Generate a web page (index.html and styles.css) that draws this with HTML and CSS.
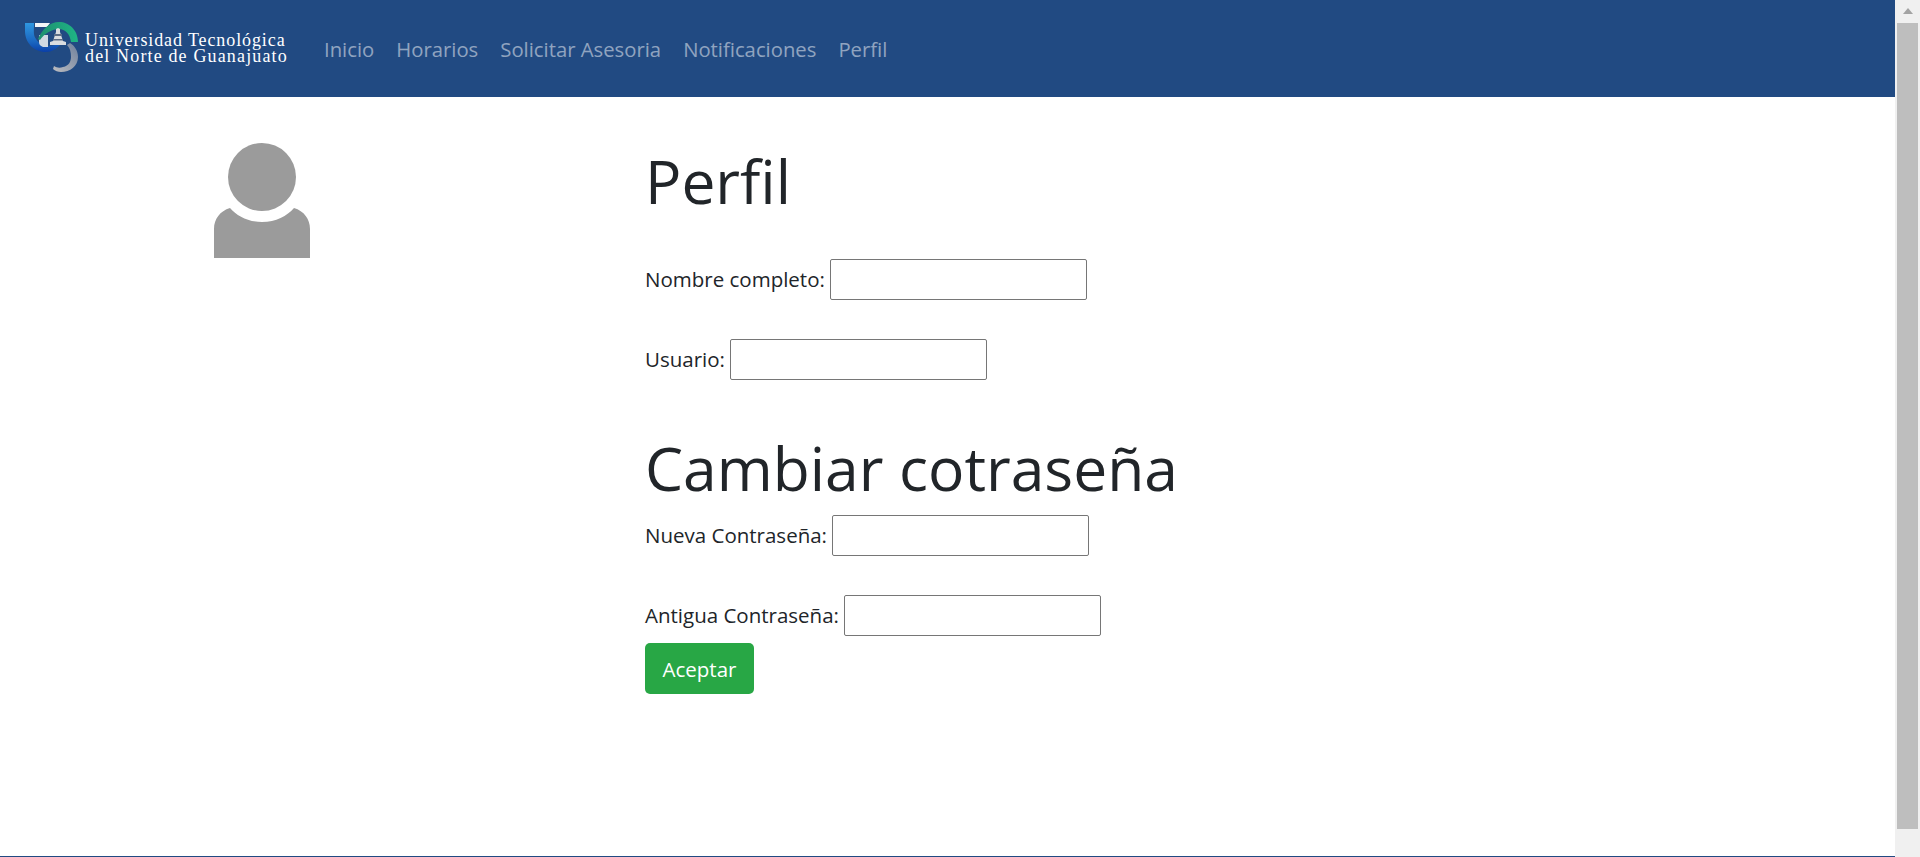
FILE: index.html
```html
<!DOCTYPE html>
<html lang="es">
<head>
<meta charset="utf-8">
<title>Perfil</title>
<link rel="stylesheet" href="styles.css">
</head>
<body>
<div class="window">
  <div class="page">
    <header class="navbar">
      <a class="brand" href="#">
        <svg class="brand-mark" width="60" height="52" viewBox="0 0 60 52">
          <defs>
            <linearGradient id="u" x1="0" y1="0" x2="0" y2="1"><stop offset="0" stop-color="#2f97e0"/><stop offset=".65" stop-color="#1a66c0"/><stop offset="1" stop-color="#0a3fa8"/></linearGradient>
            <linearGradient id="g" x1="0" y1="0" x2="1" y2="0"><stop offset="0" stop-color="#1d8f6f"/><stop offset="1" stop-color="#1fb585"/></linearGradient>
            <linearGradient id="s" x1="1" y1="0" x2="0" y2="1"><stop offset="0" stop-color="#6d7f9c"/><stop offset="1" stop-color="#bdbdc0"/></linearGradient>
          </defs>
          <path d="M0 1h9c0 8-1 12 2 16 3 5 8 7 13 7 3 0 7-1 10-3l1 2c-4 4-8 7-14 7C8 30 0 20 0 9z" fill="url(#u)"/>
          <path d="M10 1h15l-3 4h-12z" fill="#f4f6f8"/>
          <path d="M14 13h9v12h-5c-3-1-4-3-4-5z" fill="#cfd8e3"/>
          <path d="M13 17C17 7 25 0 34 0c10 0 19 8 19 20h-7c-1-8-6-13-12-13-7 0-14 4-19 11z" fill="url(#g)"/>
          <path d="M31 7l2-1 2 1v3l3 9 3 1v3H25v-3l3-1 3-9z" fill="#d9dce0"/>
          <path d="M29 12h8v2h-8zM28 17h10v1.500h-10z" fill="#5c6d86"/>
          <path d="M45 21c5 3 8 8 8 14 0 9-8 15-17 15-3 0-6-1-8-3l1-3c3 2 6 2 9 1 6-1 8-6 8-10 0-5-1-9-4-12z" fill="url(#s)"/>
        </svg>
        <span class="brand-text"><span>Universidad Tecnológica</span><span class="brand-line-two">del Norte de Guanajuato</span></span>
      </a>
      <nav class="nav">
        <a href="#">Inicio</a>
        <a href="#">Horarios</a>
        <a href="#">Solicitar Asesoria</a>
        <a href="#">Notificaciones</a>
        <a href="#">Perfil</a>
      </nav>
    </header>
    <main class="content">
      <div class="avatar-col">
        <svg class="avatar" width="96" height="115" viewBox="0 0 96 115">
          <circle cx="48" cy="34" r="34" fill="#9b9b9b"/>
          <path d="M16 65C6 68 0 76 0 86v29h96V86c0-10-6-18-16-21-7 8-18 14-32 14s-25-6-32-14z" fill="#9b9b9b"/>
        </svg>
      </div>
      <div class="form-col">
        <h1 class="title">Perfil</h1>
        <div class="field"><label>Nombre completo:</label> <input type="text"></div>
        <div class="field"><label>Usuario:</label> <input type="text"></div>
        <h1 class="title title-second">Cambiar cotraseña</h1>
        <div class="field"><label>Nueva Contraseña:</label> <input type="password"></div>
        <div class="field field-last"><label>Antigua Contraseña:</label> <input type="password"></div>
        <button class="btn" type="button">Aceptar</button>
      </div>
    </main>
    <footer class="footer"></footer>
  </div>
  <div class="scrollbar">
    <div class="arrow"></div>
    <div class="thumb"></div>
  </div>
</div>
</body>
</html>
```
FILE: styles.css
```css
* { box-sizing: border-box; }
html, body { margin: 0; height: 857px; overflow: hidden; }
body { font-family: "Open Sans", "Noto Sans", sans-serif; color: #212529; background: #fff; }
.window { display: flex; height: 857px; }
.page { flex: 1; display: flex; flex-direction: column; min-width: 0; }
.navbar { height: 97px; background: #214a82; display: flex; align-items: center; padding-left: 25px; flex: none; }
.brand { display: flex; align-items: flex-start; text-decoration: none; color: #fff; height: 52px; margin-top: -1px; }
.brand-mark { flex: none; }
.brand-text { display: flex; flex-direction: column; font-family: "Liberation Serif", serif; font-size: 18px; line-height: 16px; margin: 10px 0 0 0; white-space: nowrap; width: 215px; letter-spacing: .9px; }
.brand-line-two { letter-spacing: 1.15px; }
.nav { display: flex; gap: 22px; margin-left: 24px; }
.nav a { color: rgba(255,255,255,.5); text-decoration: none; font-size: 20.3px; }
.content { flex: 1; display: flex; padding-top: 24px; min-height: 0; }
.avatar-col { width: 645px; padding: 22px 0 0 214px; flex: none; }
.avatar { display: block; }
.form-col { flex: 1; }
.title { font-weight: 400; font-size: 60.5px; line-height: 74px; margin: 23px 0 41px; }
.title-second { margin: 52px 0 10px; }
.field { display: flex; align-items: center; gap: 5px; height: 40px; margin-bottom: 40px; font-size: 20.5px; }
.field-last { margin-bottom: 8px; }
.field input { width: 257px; height: 41px; border: 1px solid #767676; border-radius: 2px; background: #fff; padding: 1px 2px; }
.btn { display: block; width: 109px; height: 51px; border: 0; border-radius: 5px; background: #28a745; color: #fff; font: inherit; font-size: 20.5px; }
.footer { height: 1px; background: #214a82; flex: none; }
.scrollbar { width: 25px; background: #f0f0f0; flex: none; padding: 8px 2px 0; position: relative; }
.arrow { width: 0; height: 0; margin: 0 auto 9px; border-left: 5.5px solid transparent; border-right: 5.5px solid transparent; border-bottom: 6px solid #a3a3a3; }
.thumb { height: 806px; background: #bebebe; }
```
